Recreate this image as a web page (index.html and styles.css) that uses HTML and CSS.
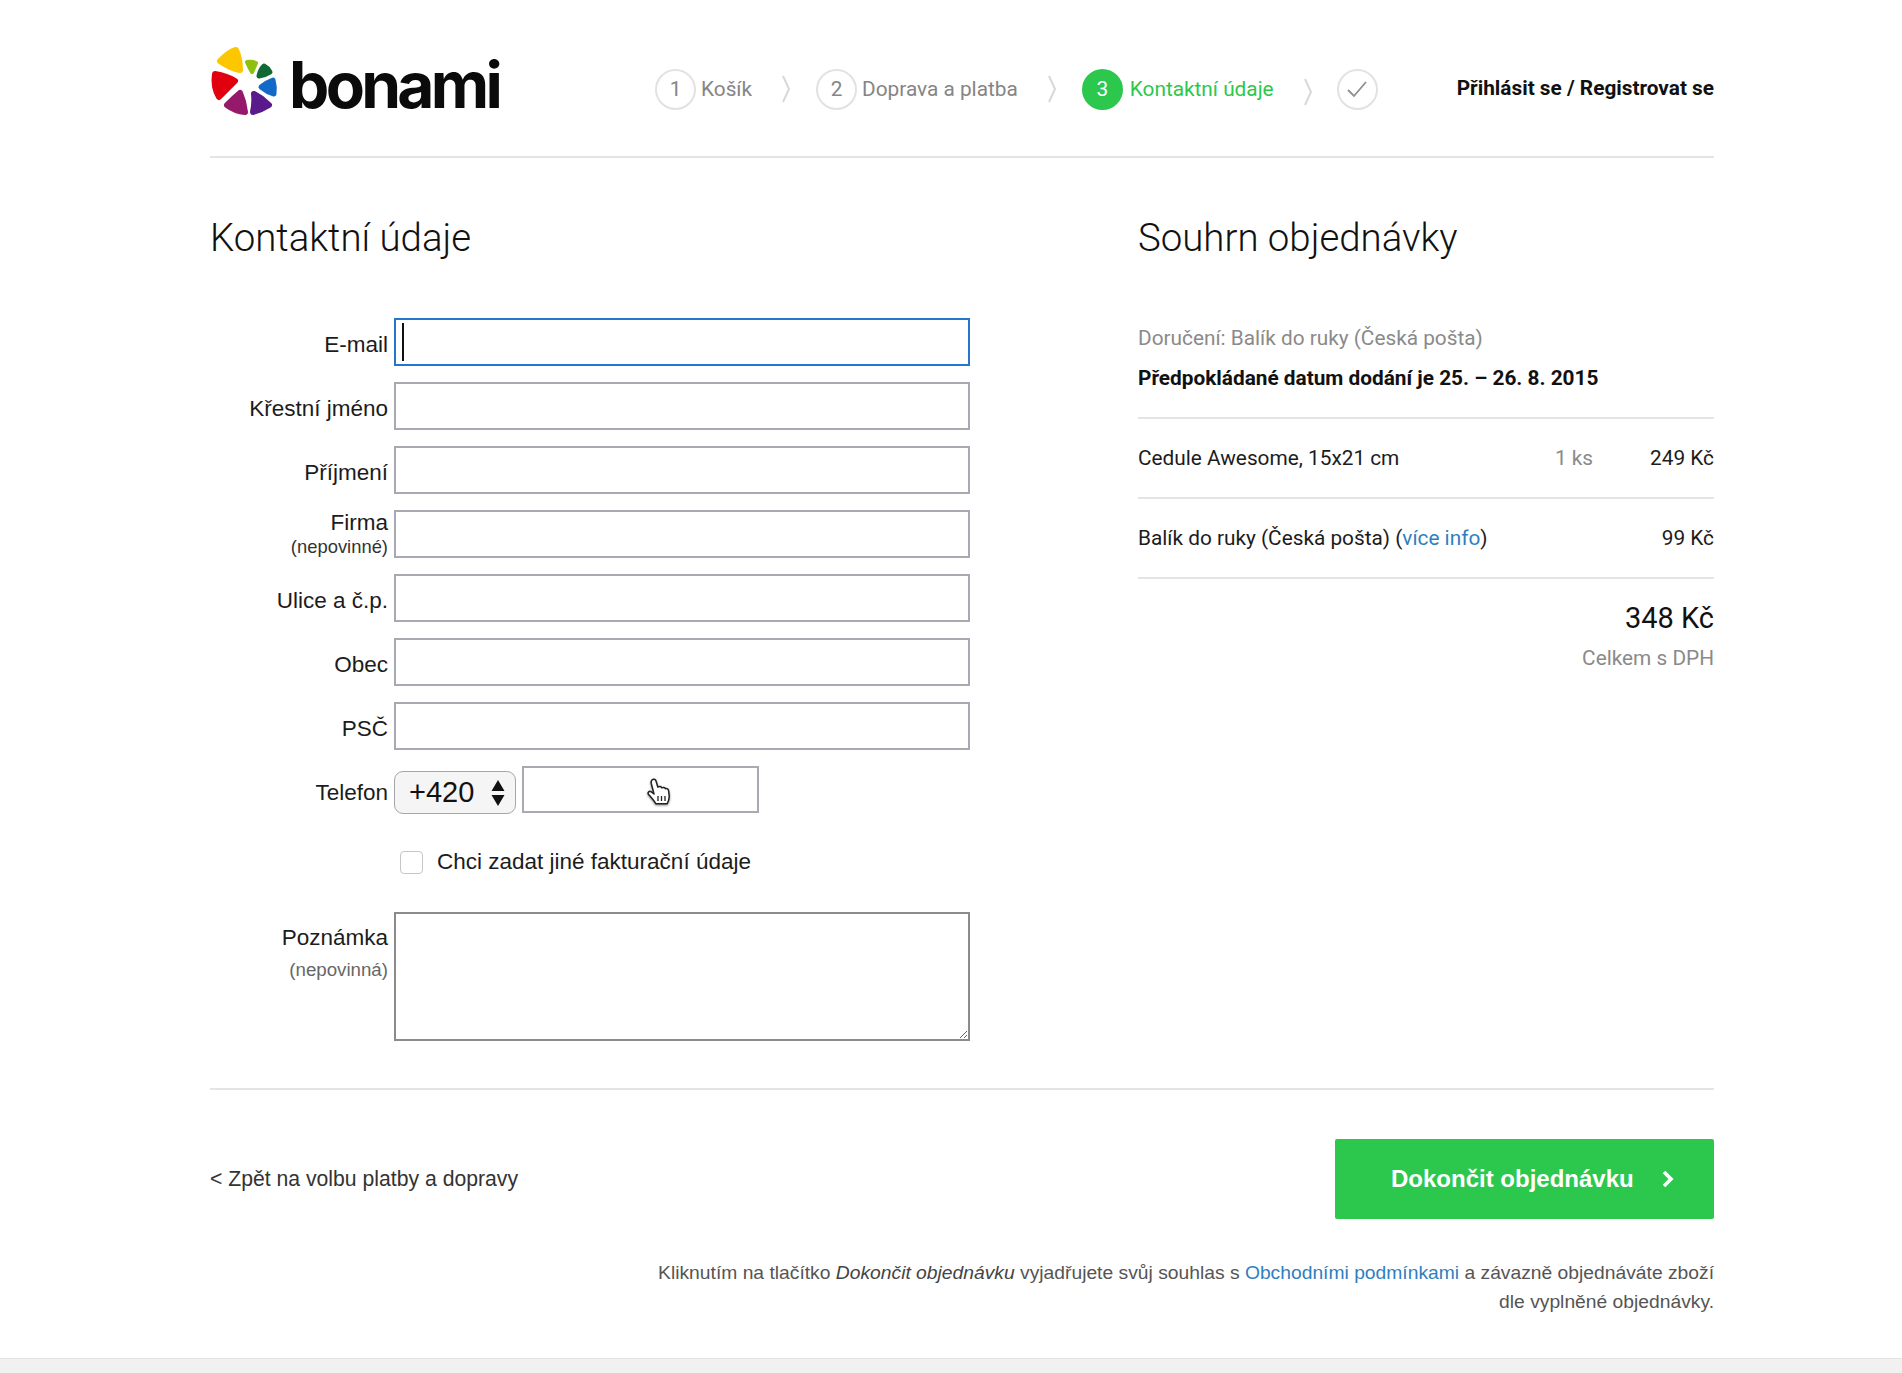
FILE: index.html
```html
<!DOCTYPE html>
<html lang="cs">
<head>
<meta charset="utf-8">
<title>Bonami – Kontaktní údaje</title>
<link rel="stylesheet" href="styles.css">
</head>
<body>
<div class="page">
  <header class="top">
    <a class="logo" href="#">
      <svg class="logo-mark" viewBox="0 0 72 76" width="72" height="76" aria-hidden="true">
        <g stroke-linejoin="round">
          <path class="p5" fill="#fdc700" stroke="#fdc700" d="M11 18Q20 9 27 7Q31 16 31 27Q21 25 11 18Z"/>
          <path class="p5" fill="#e0000f" stroke="#e0000f" d="M6 31Q18 33 26 38Q18 46 10 54Q4 44 6 31Z"/>
          <path class="p5" fill="#951a6b" stroke="#951a6b" d="M18 62Q25 55 31 50Q35 59 36 69Q26 68 18 62Z"/>
          <path class="p5" fill="#5a1a8b" stroke="#5a1a8b" d="M45 51Q53 55 60 62Q52 67 44 69Q46 60 45 51Z"/>
          <path class="p4" fill="#1269c7" stroke="#1269c7" d="M52 44Q58 39 64 37Q66 44 65 51Q58 49 52 44Z"/>
          <path class="p4" fill="#116a33" stroke="#116a33" d="M50 33Q51 27 55 23Q59 25 61 29Q56 32 50 33Z"/>
          <path class="p3" fill="#8cc20f" stroke="#8cc20f" d="M38 19Q43 18 47 20Q45 25 43 29Q40 24 38 19Z"/>
        </g>
      </svg>
      <span class="logo-word">bonami</span>
    </a>
    <nav class="steps">
      <span class="step"><span class="dot">1</span>Košík</span>
      <svg class="chev" viewBox="0 0 9 28" width="9" height="28"><path d="M1 1l6 13-6 13"/></svg>
      <span class="step"><span class="dot">2</span>Doprava a platba</span>
      <svg class="chev" viewBox="0 0 9 28" width="9" height="28"><path d="M1 1l6 13-6 13"/></svg>
      <span class="step active"><span class="dot">3</span>Kontaktní údaje</span>
      <svg class="chev low" viewBox="0 0 9 28" width="9" height="28"><path d="M1 1l6 13-6 13"/></svg>
      <span class="step"><span class="dot"><svg viewBox="0 0 22 18" width="22" height="18"><path d="M2 10l6 6L20 2"/></svg></span></span>
    </nav>
    <a class="login" href="#">Přihlásit se / Registrovat se</a>
  </header>

  <main class="cols">
    <section class="contact">
      <h1>Kontaktní údaje</h1>
      <form class="form">
        <div class="row"><label class="lab">E-mail</label><span class="field"><input class="inp focus" type="text"><span class="caret"></span></span></div>
        <div class="row"><label class="lab">Křestní jméno</label><input class="inp" type="text"></div>
        <div class="row"><label class="lab">Příjmení</label><input class="inp" type="text"></div>
        <div class="row"><label class="lab stack">Firma<small>(nepovinné)</small></label><input class="inp" type="text"></div>
        <div class="row"><label class="lab">Ulice a č.p.</label><input class="inp" type="text"></div>
        <div class="row"><label class="lab">Obec</label><input class="inp" type="text"></div>
        <div class="row"><label class="lab">PSČ</label><input class="inp" type="text"></div>
        <div class="row tel">
          <label class="lab">Telefon</label>
          <span class="sel"><span class="sel-val">+420</span>
            <svg viewBox="0 0 14 26" width="14" height="26"><path d="M7 0l6.500 11H.5zM7 26L.5 15h13z"/></svg>
          </span>
          <span class="field"><input class="inp short" type="text">
            <svg class="hand" viewBox="0 0 26 30" width="26" height="30"><path d="M6 3c1.500-1.500 3.500-.8 4 1l1.800 6c1.700-1 3.200-.6 3.900.8 1.500-.8 3.100-.3 3.700 1 1.500-.6 3 .4 3.200 2l.6 5c.2 3-.8 5.500-2 8H10c-2-3.400-5-6.500-7.500-9.500-1.200-1.600.6-3.600 2.400-2.600L8 17 5.300 6.500C5 5.200 5.200 3.900 6 3z"/><path class="hl" d="M12 19v5M15.500 19v5M19 19v5"/></svg>
          </span>
        </div>
        <label class="check"><span class="box"></span>Chci zadat jiné fakturační údaje</label>
        <div class="row note">
          <label class="lab top-lab">Poznámka<small>(nepovinná)</small></label>
          <textarea class="area"></textarea>
        </div>
      </form>
    </section>

    <aside class="summary">
      <h1>Souhrn objednávky</h1>
      <p class="ship">Doručení: Balík do ruky (Česká pošta)</p>
      <p class="date">Předpokládané datum dodání je 25. – 26. 8. 2015</p>
      <div class="line"><span class="name">Cedule Awesome, 15x21 cm</span><span class="qty">1 ks</span><span class="price">249 Kč</span></div>
      <div class="line"><span class="name">Balík do ruky (Česká pošta) (<a href="#">více info</a>)</span><span class="price">99 Kč</span></div>
      <div class="total">348 Kč</div>
      <div class="vat">Celkem s DPH</div>
    </aside>
  </main>

  <div class="actions">
    <a class="back" href="#">&lt; Zpět na volbu platby a dopravy</a>
    <button class="go" type="button">Dokončit objednávku
      <svg viewBox="0 0 12 18" width="12" height="18"><path d="M2 2l7 7-7 7"/></svg>
    </button>
  </div>
  <p class="terms">Kliknutím na tlačítko <em>Dokončit objednávku</em> vyjadřujete svůj souhlas s <a href="#">Obchodními podmínkami</a> a závazně objednáváte zboží<br>dle vyplněné objednávky.</p>
</div>
<footer class="foot"></footer>
</body>
</html>
```
FILE: styles.css
```css
* { box-sizing: border-box; }
html, body { margin: 0; padding: 0; background: #fff; }
body { font-family: "Liberation Sans", Arial, sans-serif; color: #1c1c1c; height: 1373px; overflow: hidden; display: flex; flex-direction: column; }
a { text-decoration: none; color: inherit; }

.page { width: 1504px; margin-left: 210px; flex: 1; }

/* header */
.top { height: 158px; border-bottom: 2px solid #e4e4e4; display: flex; align-items: center; }
.logo { display: flex; align-items: center; width: 445px; height: 100%; gap: 8px; }
.logo-mark { flex: none; margin-top: 6px; margin-left: -1px; }
.p5 { stroke-width: 6; }
.p4 { stroke-width: 5; }
.p3 { stroke-width: 4; }
.logo-word { font-family: Inter, "Liberation Sans", sans-serif; font-weight: 700; font-size: 64px; letter-spacing: -3.7px; color: #0b0b0b; line-height: 1; margin-top: 14px; }
.steps { display: flex; align-items: center; font-family: Roboto, sans-serif; font-size: 20.8px; color: #858585; height: 42px; align-self: flex-start; margin-top: 68px; }
.step { display: flex; align-items: center; gap: 5px; white-space: nowrap; }
.dot { width: 41px; height: 41px; border-radius: 50%; border: 2px solid #e2e2e2; display: flex; align-items: center; justify-content: center; color: #858585; }
.dot svg { fill: none; stroke: #8e8e8e; stroke-width: 1.8; }
.active { color: #2cc84d; gap: 7px; }
.active .dot { background: #2cc84d; border-color: #2cc84d; color: #fff; }
.chev { fill: none; stroke: #d8d8d8; stroke-width: 2; margin: 0 25px 0 30px; flex: none; }
.chev.low { margin: 5px 24px 0 30px; }
.login { margin-left: auto; font-family: Roboto, sans-serif; font-weight: 700; font-size: 20.8px; color: #111; align-self: flex-start; margin-top: 76px; white-space: nowrap; }

/* columns */
.cols { display: grid; grid-template-columns: 928px 576px; height: 932px; border-bottom: 2px solid #e4e4e4; }
h1 { font-family: Roboto, sans-serif; font-weight: 300; font-size: 38.4px; line-height: 46px; margin: 57px 0; color: #111; }

/* form */
.form { display: flex; flex-direction: column; gap: 16px; }
.row { display: flex; align-items: center; gap: 6px; }
.lab { width: 178px; flex: none; text-align: right; font-size: 22.5px; line-height: 26px; color: #1c1c1c; padding-top: 6px; }
.lab small { display: block; font-size: 18.4px; line-height: 22px; color: #333; }
.lab.stack { padding-top: 0; }
.field { position: relative; display: block; }
.inp { width: 576px; height: 48px; border: 2px solid #a9a9b3; background: #fff; padding: 0; margin: 0; display: block; border-radius: 0; outline: none; }
.inp.focus { border-color: #2477cc; }
.caret { position: absolute; left: 8px; top: 5px; width: 2px; height: 38px; background: #111; }
.inp.short { width: 237px; height: 47px; }
.row.tel { gap: 6px; align-items: flex-start; }
.row.tel .lab { padding-top: 14px; }
.sel { width: 122px; height: 43px; margin-top: 5px; flex: none; border: 1.5px solid #a6a6ab; border-radius: 9px; background: #f5f5f5; display: flex; align-items: center; justify-content: space-between; padding: 0 10px 0 14px; font-size: 29px; color: #111; }
.sel svg { fill: #111; }
.hand { position: absolute; left: 124px; top: 11px; filter: drop-shadow(0 1px 1px rgba(0,0,0,.45)); }
.hand path { fill: #fff; stroke: #222; stroke-width: 1.5; stroke-linejoin: round; }
.hand .hl { fill: none; stroke-width: 1.3; }
.check { display: flex; align-items: center; font-size: 22.5px; margin: 20px 0 0 190px; gap: 14px; height: 24px; color: #1c1c1c; }
.box { width: 23px; height: 23px; border: 1.5px solid #c6c6c6; border-radius: 4px; background: #fff; flex: none; }
.row.note { margin-top: 22px; align-items: flex-start; }
.top-lab { padding-top: 13px; }
.top-lab small { font-size: 18.7px; margin-top: 8px; color: #666; }
.area { width: 576px; height: 129px; border: 2px solid #8b8b8b; border-radius: 0; background: #fff; margin: 0; padding: 0; display: block; outline: none; }

/* summary */
.summary { font-family: Roboto, sans-serif; font-size: 20.8px; }
.ship { margin: 0; color: #8a8a8a; line-height: 26px; padding-top: 7px; }
.date { margin: 14px 0 0; font-weight: 700; color: #111; line-height: 26px; height: 52px; }
.line { height: 80px; border-top: 2px solid #e4e4e4; display: flex; align-items: center; color: #1c1c1c; }
.line .name { flex: 1; }
.line a { color: #2f7fbf; }
.qty { color: #8a8a8a; margin-right: 57px; }
.total { border-top: 2px solid #e4e4e4; text-align: right; font-size: 29px; line-height: 34px; padding-top: 22px; color: #111; height: 62px; }
.vat { text-align: right; color: #8a8a8a; line-height: 26px; margin-top: 6px; }

/* actions */
.actions { display: flex; justify-content: space-between; align-items: center; margin-top: 49px; }
.back { font-size: 21.2px; color: #333; }
.go { width: 379px; height: 80px; background: #2cc84d; border: 0; border-radius: 2px; color: #fff; font-family: "Liberation Sans", sans-serif; font-weight: 700; font-size: 24px; display: flex; align-items: center; padding: 0 0 0 56px; gap: 28px; }
.go svg { fill: none; stroke: #fff; stroke-width: 3.6; }
.terms { text-align: right; font-size: 19.28px; line-height: 29px; color: #555; margin: 39px 0 0; }
.terms a { color: #2f7fbf; }
.terms em { color: #444; }

.foot { height: 15px; flex: none; background: #f1f1f1; border-top: 1px solid #e3e3e3; }
```
